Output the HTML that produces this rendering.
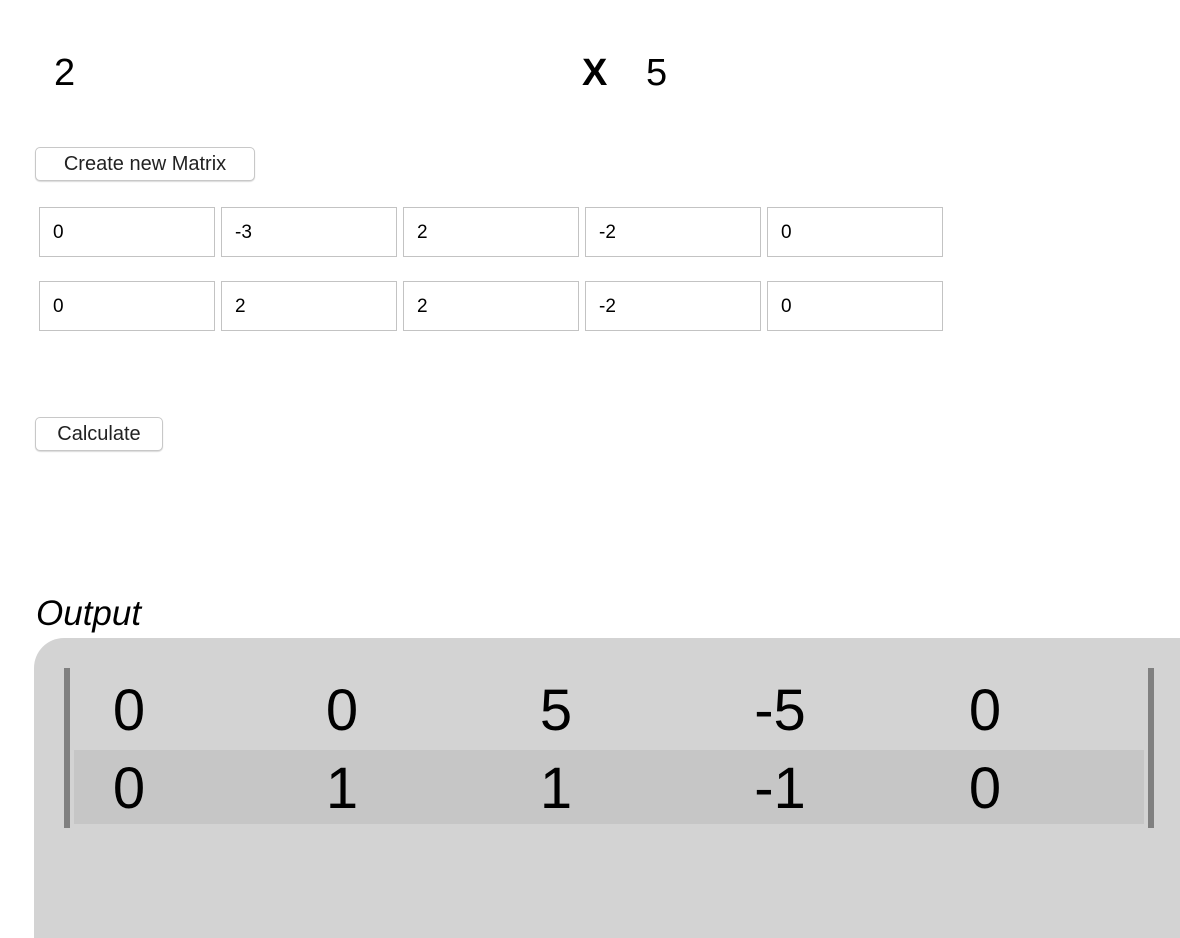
<!DOCTYPE html>
<html><head><style>
body{margin:0;width:1180px;height:904px;overflow:hidden;background:#fff;font-family:"Liberation Sans",Arial,sans-serif;position:relative}
.a{position:absolute;white-space:nowrap}
.btn{position:absolute;border:1px solid #c8c8c8;border-radius:5px;background:#fff;box-shadow:0 1px 1px rgba(0,0,0,.15);font-size:20px;color:#222;text-align:center;line-height:33px;box-sizing:border-box;height:34px}
.in{position:absolute;width:176px;height:50px;border:1px solid #c3c3c3;box-sizing:border-box;font-size:19px;line-height:50px;padding-left:13px}
.n{position:absolute;font-size:58px;line-height:58px;width:120px;text-align:center}
</style></head><body>
<div class="a" style="left:54px;top:53px;font-size:38px;line-height:40px">2</div>
<div class="a" style="left:582px;top:53px;font-size:38px;line-height:40px;font-weight:bold">X</div>
<div class="a" style="left:646px;top:53px;font-size:38px;line-height:40px">5</div>
<div class="btn" style="left:35px;top:147px;width:220px">Create new Matrix</div>
<div class="in" style="left:39px;top:207px">0</div>
<div class="in" style="left:221px;top:207px">-3</div>
<div class="in" style="left:403px;top:207px">2</div>
<div class="in" style="left:585px;top:207px">-2</div>
<div class="in" style="left:767px;top:207px">0</div>
<div class="in" style="left:39px;top:281px">0</div>
<div class="in" style="left:221px;top:281px">2</div>
<div class="in" style="left:403px;top:281px">2</div>
<div class="in" style="left:585px;top:281px">-2</div>
<div class="in" style="left:767px;top:281px">0</div>
<div class="btn" style="left:35px;top:417px;width:128px">Calculate</div>
<div class="a" style="left:36px;top:594px;font-size:35px;line-height:40px;font-style:italic">Output</div>
<div class="a" style="left:34px;top:638px;width:1200px;height:300px;background:#d3d3d3;border-radius:30px 0 0 0"></div>
<div class="a" style="left:64px;top:668px;width:6px;height:160px;background:#808080"></div>
<div class="a" style="left:1148px;top:668px;width:6px;height:160px;background:#808080"></div>
<div class="a" style="left:74px;top:750px;width:1070px;height:74px;background:#c6c6c6"></div>
<div class="n" style="left:69px;top:682px">0</div>
<div class="n" style="left:282px;top:682px">0</div>
<div class="n" style="left:496px;top:682px">5</div>
<div class="n" style="left:720px;top:682px">-5</div>
<div class="n" style="left:925px;top:682px">0</div>
<div class="n" style="left:69px;top:760px">0</div>
<div class="n" style="left:282px;top:760px">1</div>
<div class="n" style="left:496px;top:760px">1</div>
<div class="n" style="left:720px;top:760px">-1</div>
<div class="n" style="left:925px;top:760px">0</div>
</body></html>
